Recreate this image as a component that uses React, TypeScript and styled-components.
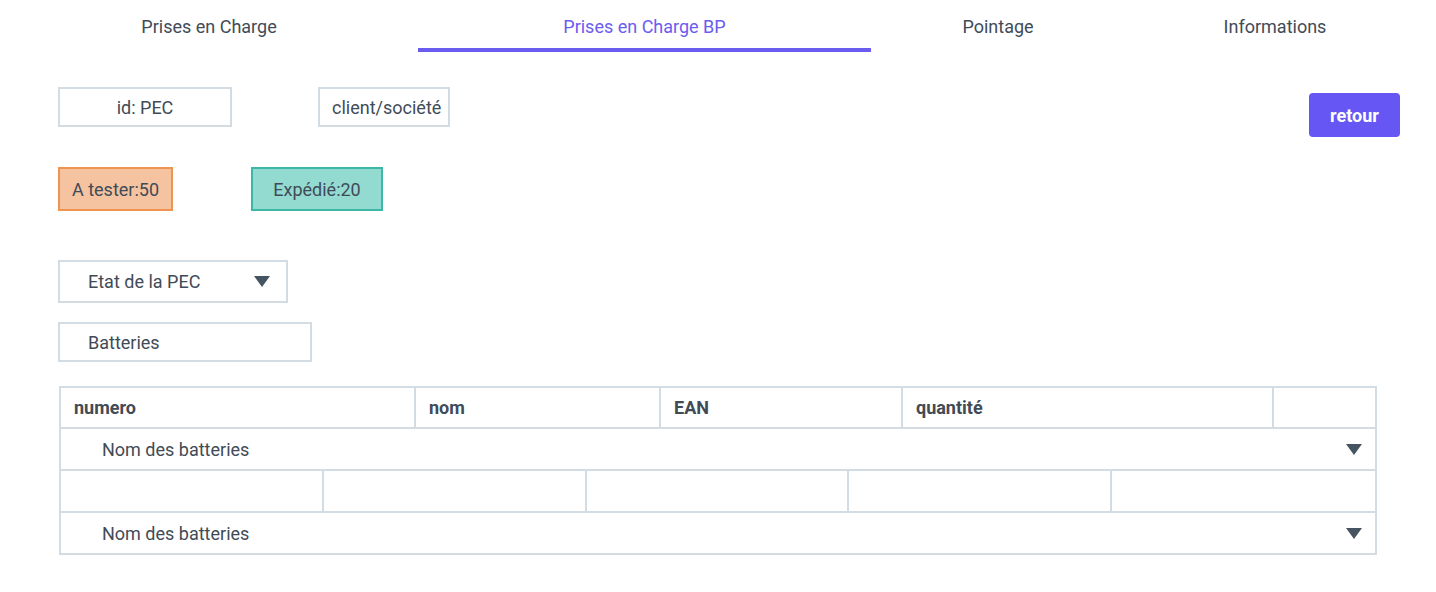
import React from 'react'
import styled, { createGlobalStyle } from 'styled-components'

const GlobalStyle = createGlobalStyle`
  body {
    margin: 0;
    background: #ffffff;
    font-family: Roboto, "Liberation Sans", sans-serif;
    color: #414b57;
  }
`

const BORDER = '#d3dbe3'

const Page = styled.div`
  width: 1436px;
  height: 592px;
  overflow: hidden;
`

const Tabs = styled.nav`
  display: grid;
  grid-template-columns: 418px 453px 254px 300px;
  height: 52px;
`

const Tab = styled.div<{ $active?: boolean }>`
  display: flex;
  align-items: center;
  justify-content: center;
  padding-top: 4px;
  font-size: 18px;
  color: ${({ $active }) => ($active ? '#6b5cf0' : '#414b57')};
  border-bottom: 4px solid ${({ $active }) => ($active ? '#6b5cf0' : 'transparent')};
`

const Content = styled.div`
  padding: 35px 59px 0 58px;
`

const TopRow = styled.div`
  display: flex;
  align-items: flex-start;
`

const Field = styled.div<{ $width: number; $center?: boolean }>`
  box-sizing: border-box;
  width: ${({ $width }) => $width}px;
  height: 40px;
  border: 2px solid ${BORDER};
  display: flex;
  align-items: center;
  justify-content: ${({ $center }) => ($center ? 'center' : 'flex-start')};
  padding: 0 ${({ $center }) => ($center ? 0 : 12)}px;
  font-size: 18px;
  white-space: nowrap;
  overflow: hidden;
`

const FieldGroup = styled.div`
  display: flex;
  gap: 86px;
`

const ReturnButton = styled.button`
  margin-left: auto;
  margin-top: 6px;
  margin-right: -23px;
  width: 91px;
  height: 44px;
  border: none;
  border-radius: 4px;
  background: #6657f4;
  color: #ffffff;
  font-family: Roboto, "Liberation Sans", sans-serif;
  font-weight: 700;
  font-size: 18px;
`

const BadgeRow = styled.div`
  display: flex;
  gap: 78px;
  margin-top: 30px;
`

const Badge = styled.div<{ $bg: string; $border: string; $width: number }>`
  box-sizing: border-box;
  width: ${({ $width }) => $width}px;
  height: 44px;
  background: ${({ $bg }) => $bg};
  border: 2px solid ${({ $border }) => $border};
  display: flex;
  align-items: center;
  justify-content: center;
  font-size: 18px;
`

const SelectBox = styled.div<{ $width: number; $height: number }>`
  box-sizing: border-box;
  width: ${({ $width }) => $width}px;
  height: ${({ $height }) => $height}px;
  border: 2px solid ${BORDER};
  display: flex;
  align-items: center;
  padding: 0 16px 0 28px;
  font-size: 18px;
`

const Stack = styled.div`
  display: flex;
  flex-direction: column;
  gap: 19px;
  margin-top: 49px;
`

const Caret = styled.span`
  margin-left: auto;
  width: 0;
  height: 0;
  border-left: 8px solid transparent;
  border-right: 8px solid transparent;
  border-top: 11px solid #465360;
`

const Table = styled.div`
  box-sizing: border-box;
  margin-top: 24px;
  margin-left: 1px;
  width: 1318px;
  border: 2px solid ${BORDER};
  border-bottom: none;
`

const Row = styled.div<{ $cols: string; $height?: number }>`
  display: grid;
  grid-template-columns: ${({ $cols }) => $cols};
  height: ${({ $height }) => $height ?? 42}px;
  border-bottom: 2px solid ${BORDER};
  box-sizing: border-box;
`

const Cell = styled.div<{ $last?: boolean }>`
  display: flex;
  align-items: center;
  padding-left: 13px;
  font-size: 18px;
  font-weight: 700;
  border-right: ${({ $last }) => ($last ? 'none' : `2px solid ${BORDER}`)};
`

const WideRow = styled.div`
  display: flex;
  align-items: center;
  height: 42px;
  box-sizing: border-box;
  border-bottom: 2px solid ${BORDER};
  padding: 0 13px 0 41px;
  font-size: 18px;
  margin-left: -2px;
  border-left: 2px solid ${BORDER};
`

const headers = ['numero', 'nom', 'EAN', 'quantité', '']

export default function App() {
  return (
    <Page>
      <GlobalStyle />
      <Tabs>
        <Tab>Prises en Charge</Tab>
        <Tab $active>Prises en Charge BP</Tab>
        <Tab>Pointage</Tab>
        <Tab>Informations</Tab>
      </Tabs>
      <Content>
        <TopRow>
          <FieldGroup>
            <Field $width={174} $center>id: PEC</Field>
            <Field $width={132}>client/société</Field>
          </FieldGroup>
          <ReturnButton>retour</ReturnButton>
        </TopRow>
        <BadgeRow>
          <Badge $width={115} $bg="#f5c3a0" $border="#ee9450">A tester:50</Badge>
          <Badge $width={132} $bg="#93dbd0" $border="#3db8a6">Expédié:20</Badge>
        </BadgeRow>
        <Stack>
          <SelectBox $width={230} $height={43}>
            Etat de la PEC
            <Caret />
          </SelectBox>
          <SelectBox $width={254} $height={40}>Batteries</SelectBox>
        </Stack>
        <Table>
          <Row $cols="355px 245px 242px 371px 1fr" $height={41}>
            {headers.map((h, i) => (
              <Cell key={i} $last={i === headers.length - 1}>{h}</Cell>
            ))}
          </Row>
          <WideRow>
            Nom des batteries
            <Caret />
          </WideRow>
          <Row $cols="repeat(5, 1fr)">
            {[0, 1, 2, 3, 4].map(i => (
              <Cell key={i} $last={i === 4} />
            ))}
          </Row>
          <WideRow>
            Nom des batteries
            <Caret />
          </WideRow>
        </Table>
      </Content>
    </Page>
  )
}
